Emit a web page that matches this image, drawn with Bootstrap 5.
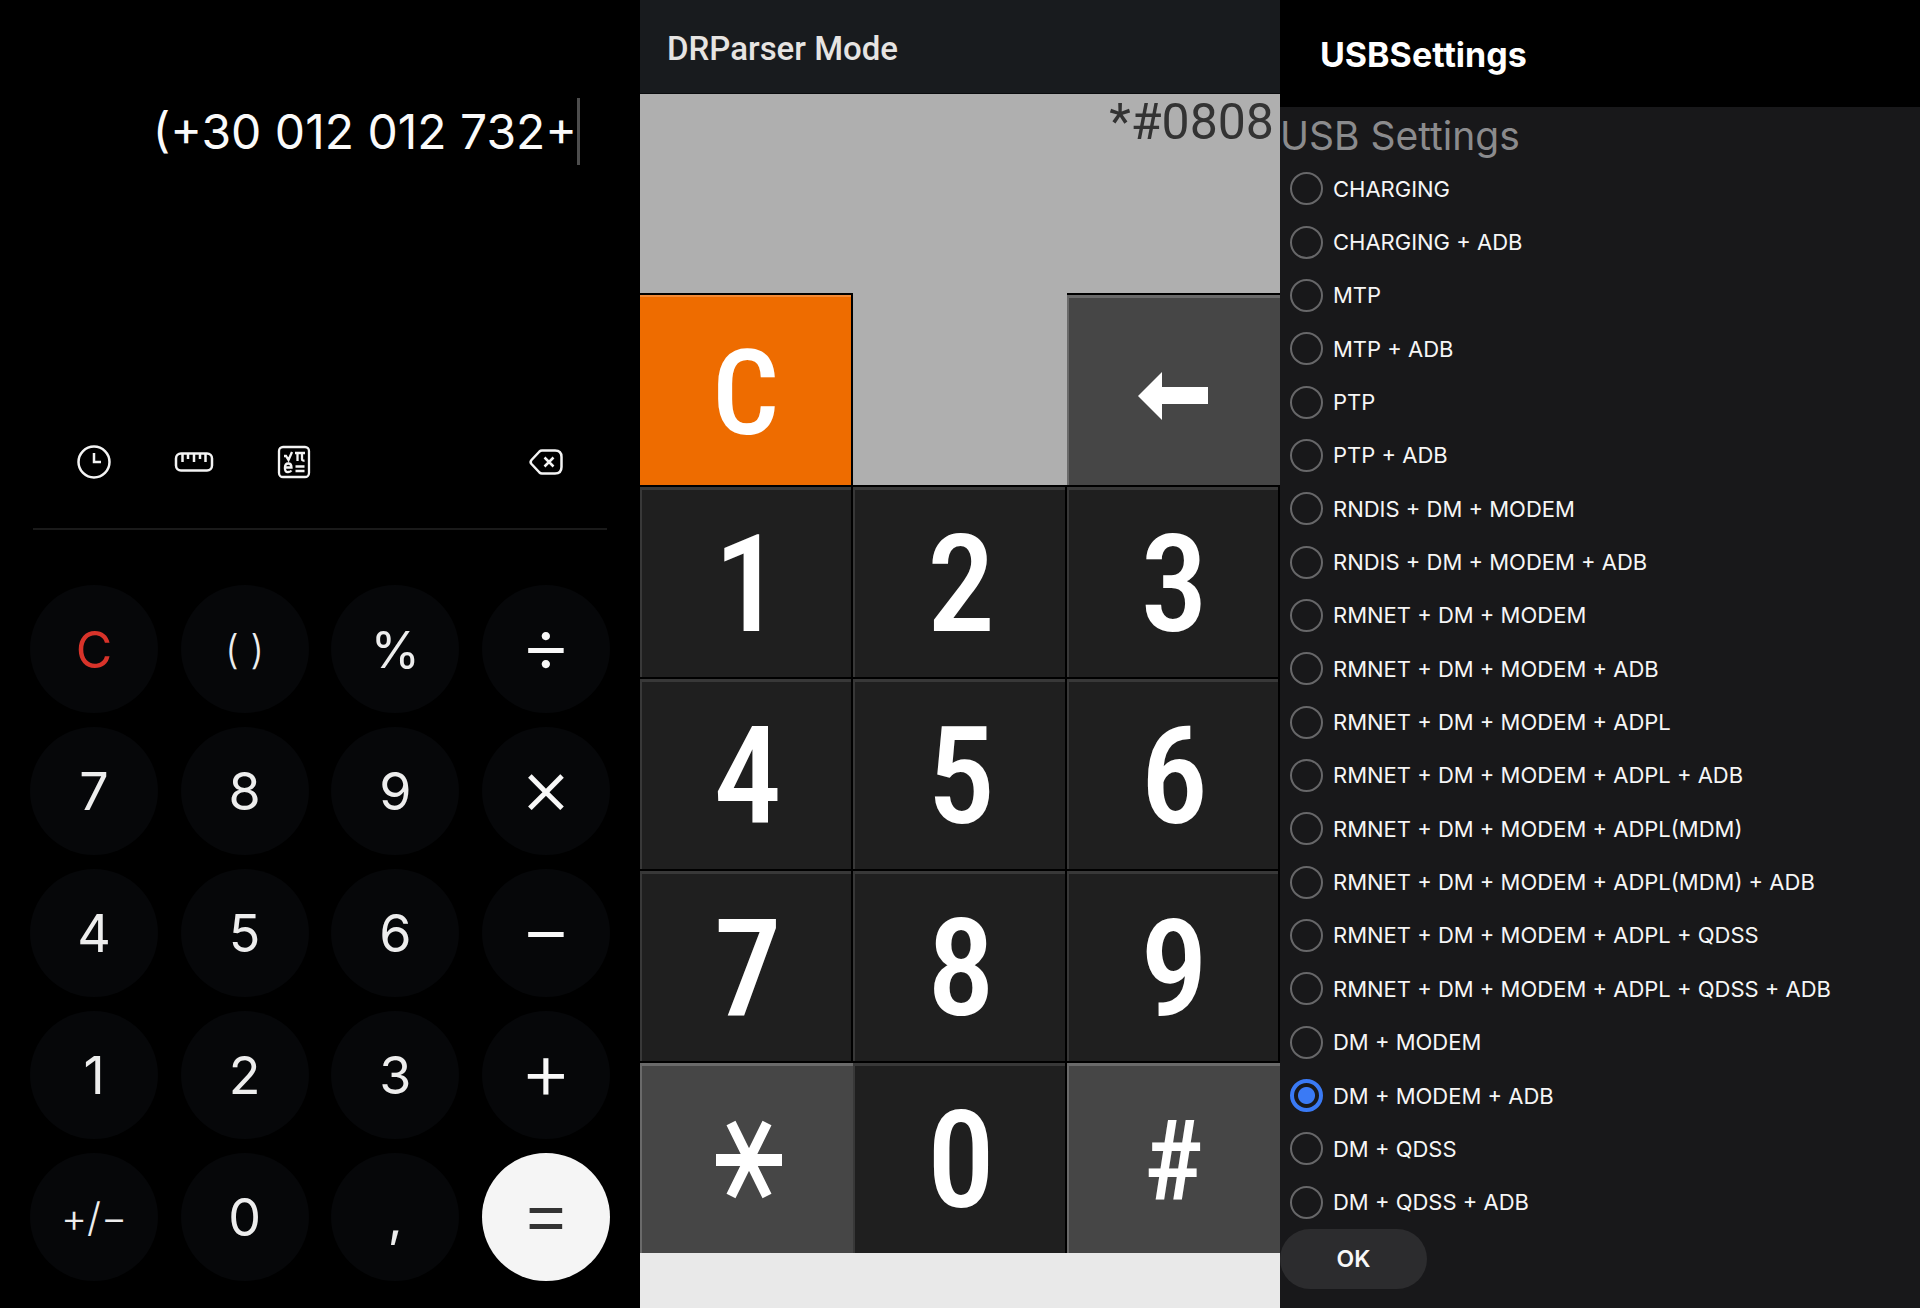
<!DOCTYPE html>
<html lang="en">
<head>
<meta charset="utf-8">
<meta name="viewport" content="width=device-width, initial-scale=1">
<title>Calculator, DRParser Mode, USBSettings</title>
<link href="https://cdn.jsdelivr.net/npm/bootstrap@5.3.0/dist/css/bootstrap.min.css" rel="stylesheet">
<style>
  body { background: #000; font-family: Inter, "Liberation Sans", sans-serif; }
  .screen { min-height: 100vh; }
  .plain-field { background: none; border: 0; outline: 0; padding: 0; min-width: 0; text-align: right; }
  button { border: 0; padding: 0; }

  /* Calculator */
  .calc-screen { background: #000; color: #fafafa; }
  .calc-display { height: 212px; padding: 98px 60px 0 30px; }
  .calc-display input { color: #fafafa; font-size: 48px; font-weight: 400; line-height: 67px; height: 67px; }
  .text-caret { width: 4px; height: 67px; background: #4d4d4d; }
  .calc-tools { margin-top: 212px; padding: 0 44px; height: 76px; }
  .calc-tools button { width: 100px; height: 76px; background: none; color: #f4f4f4; }
  .calc-tools svg { width: 40px; height: 40px; }
  .calc-rule { height: 2px; margin: 28px 33px 55px; background: #1a1a1a; }
  .calc-pad { display: grid; grid-template-columns: repeat(4, 128px); justify-content: space-between; row-gap: 14px; padding: 0 30px 26px; }
  .calc-pad button { height: 128px; padding-top: 2px; border-radius: 50%; background: #060709; color: #ededed; font-size: 52px; font-weight: 400; line-height: 60px; }
  .calc-pad .key-clear { color: #d8332a; font-size: 50px; }
  .calc-pad .key-mid { font-size: 50px; }
  .calc-pad .key-small { font-size: 40px; font-weight: 300; }
  .calc-pad .key-op { padding-bottom: 12px; color: #f8f8f8; font-size: 80px; font-weight: 300; }
  .calc-pad .key-equals { background: #f5f5f5; color: #333; }

  /* Parser keypad */
  .parser-screen { background: #e9e9e9; font-family: Roboto, "Liberation Sans", sans-serif; }
  .parser-bar { height: 94px; padding: 4px 27px 0; background: #181b1e; border-bottom: 1px solid #0a0c0e; color: #e6e4e2; }
  .parser-bar h1 { font-size: 33px; line-height: 40px; font-weight: 500; }
  .parser-readout { height: 199px; padding-right: 6px; background: #afafaf; }
  .parser-readout input { height: 56px; color: #333; font-size: 50px; line-height: 56px; }
  .parser-pad { display: grid; grid-template-columns: repeat(3, 1fr); background: #afafaf; }
  .parser-pad button { height: 192px; padding-top: 6px; padding-left: 4px; background: #1f1f1f; color: #fff; border-top: 2px solid #000; border-right: 2px solid #000; box-shadow: inset 2px 3px 0 #383838; font-family: "Roboto Condensed", "Liberation Sans Narrow", "Liberation Sans", sans-serif; font-size: 136px; font-weight: 500; line-height: 160px; }
  .parser-pad .pad-clear { padding-top: 8px; padding-left: 0; background: #ee6c00; box-shadow: inset 0 2px 0 #f38a35; font-size: 118px; }
  .parser-pad .pad-grey { padding-left: 0; background: #464646; border-right: 0; box-shadow: inset 2px 3px 0 #6a6a6a; font-size: 112px; }
  .parser-pad svg { display: block; width: 70px; height: 94px; margin: 0 auto; }

  /* USB settings */
  .usb-screen { background: #18181a; color: #f6f6f6; }
  .usb-bar { height: 107px; padding: 2px 40px 0; background: #000; }
  .usb-bar h1 { font-size: 34px; line-height: 40px; font-weight: 700; }
  .usb-heading { height: 55px; padding-top: 4px; color: #8b8b8d; font-size: 39px; line-height: 50px; font-weight: 400; }
  .usb-option { padding-left: 10px; gap: 10px; font-size: 22px; line-height: 30px; }
  .usb-option input { appearance: none; flex: none; width: 33px; height: 33px; margin: 0; border: 2px solid #676769; border-radius: 50%; }
  .usb-option input:checked { border: 4px solid #3a7af5; background: radial-gradient(circle, #3a7af5 8px, transparent 9px); }
  .usb-ok { width: 147px; height: 60px; margin-bottom: 19px; border-radius: 30px; background: #2c2c2e; color: #f8f8f8; font-size: 23px; font-weight: 600; line-height: 30px; }
</style>
<script src="https://cdn.jsdelivr.net/npm/bootstrap@5.3.0/dist/js/bootstrap.bundle.min.js"></script>
</head>
<body>
<main class="container-fluid p-0">
  <div class="row g-0">

    <section class="col-4 screen calc-screen d-flex flex-column" aria-label="Calculator">
      <div class="calc-display d-flex align-items-start">
        <input class="plain-field flex-grow-1" type="text" value="(+30 012 012 732+" aria-label="Expression">
        <span class="text-caret"></span>
      </div>
      <div class="calc-tools d-flex align-items-center">
        <button type="button" aria-label="History"><svg viewBox="0 0 40 40" fill="none" stroke="currentColor" stroke-width="2.500"><circle cx="20" cy="20" r="15.500"/><path d="M20 11v9h7"/></svg></button>
        <button type="button" aria-label="Unit converter"><svg viewBox="0 0 40 40" fill="none" stroke="currentColor" stroke-width="2.500"><rect x="2" y="11.500" width="36" height="17" rx="5"/><path d="M8.500 12v8M14 12v5M20 12v8M26 12v5M31.500 12v8"/></svg></button>
        <button type="button" aria-label="Scientific mode"><svg viewBox="0 0 40 40" fill="none" stroke="currentColor" stroke-width="2.300"><rect x="5" y="5" width="30" height="30" rx="4"/><path d="M10 14l2 0 2.500 4 3.500-8M21 11h10M23.500 11v8M28 11v6q0 2 2.500 1.500M11 25.500h6.500q0-4-3.300-4t-3.300 4.500 3.300 4q2.300 0 3.200-1.500M21.500 24.500h9M21.500 29h9"/></svg></button>
        <button class="ms-auto" type="button" aria-label="Backspace"><svg viewBox="0 0 40 40" fill="none" stroke="currentColor" stroke-width="2.500" stroke-linejoin="round"><path d="M16 8.500h13q6.500 0 6.500 6.500v10q0 6.500-6.500 6.500H16q-1.500 0-2.500-1L5.500 22q-1.800-2 0-4l8-8.500q1-1 2.500-1z"/><path d="M18.500 15.500l9 9M27.500 15.500l-9 9"/></svg></button>
      </div>
      <div class="calc-rule"></div>
      <div class="calc-pad">
        <button type="button" class="key-clear">C</button><button type="button" class="key-small">( )</button><button type="button" class="key-mid">%</button><button type="button" class="key-op">÷</button>
        <button type="button">7</button><button type="button">8</button><button type="button">9</button><button type="button" class="key-op">×</button>
        <button type="button">4</button><button type="button">5</button><button type="button">6</button><button type="button" class="key-op">−</button>
        <button type="button">1</button><button type="button">2</button><button type="button">3</button><button type="button" class="key-op">+</button>
        <button type="button" class="key-small">+/−</button><button type="button">0</button><button type="button">,</button><button type="button" class="key-op key-equals">=</button>
      </div>
    </section>

    <section class="col-4 screen parser-screen" aria-label="DRParser Mode">
      <header class="parser-bar d-flex align-items-center"><h1 class="m-0">DRParser Mode</h1></header>
      <div class="parser-readout"><input class="plain-field w-100" type="text" value="*#0808" aria-label="Code"></div>
      <div class="parser-pad">
        <button type="button" class="pad-clear">C</button><span></span><button type="button" class="pad-grey" aria-label="Delete"><svg viewBox="0 0 70 94"><path d="M0 50L24 26V41H70V58H24V74z" fill="#fff"/></svg></button>
        <button type="button">1</button><button type="button">2</button><button type="button">3</button>
        <button type="button">4</button><button type="button">5</button><button type="button">6</button>
        <button type="button">7</button><button type="button">8</button><button type="button">9</button>
        <button type="button" class="pad-grey" aria-label="*"><svg viewBox="0 0 70 94" fill="none" stroke="#fff"><path d="M4 46H70" stroke-width="12"/><path d="M19 9L55 82M55 9L19 82" stroke-width="10"/></svg></button><button type="button">0</button><button type="button" class="pad-grey">#</button>
      </div>
    </section>

    <section class="col-4 screen usb-screen d-flex flex-column" aria-label="USBSettings">
      <header class="usb-bar d-flex align-items-center"><h1 class="m-0 text-white">USBSettings</h1></header>
      <h2 class="usb-heading m-0">USB Settings</h2>
      <form class="d-flex flex-column flex-grow-1">
        <label class="usb-option d-flex align-items-center flex-fill"><input type="radio" name="usb">CHARGING</label>
        <label class="usb-option d-flex align-items-center flex-fill"><input type="radio" name="usb">CHARGING + ADB</label>
        <label class="usb-option d-flex align-items-center flex-fill"><input type="radio" name="usb">MTP</label>
        <label class="usb-option d-flex align-items-center flex-fill"><input type="radio" name="usb">MTP + ADB</label>
        <label class="usb-option d-flex align-items-center flex-fill"><input type="radio" name="usb">PTP</label>
        <label class="usb-option d-flex align-items-center flex-fill"><input type="radio" name="usb">PTP + ADB</label>
        <label class="usb-option d-flex align-items-center flex-fill"><input type="radio" name="usb">RNDIS + DM + MODEM</label>
        <label class="usb-option d-flex align-items-center flex-fill"><input type="radio" name="usb">RNDIS + DM + MODEM + ADB</label>
        <label class="usb-option d-flex align-items-center flex-fill"><input type="radio" name="usb">RMNET + DM + MODEM</label>
        <label class="usb-option d-flex align-items-center flex-fill"><input type="radio" name="usb">RMNET + DM + MODEM + ADB</label>
        <label class="usb-option d-flex align-items-center flex-fill"><input type="radio" name="usb">RMNET + DM + MODEM + ADPL</label>
        <label class="usb-option d-flex align-items-center flex-fill"><input type="radio" name="usb">RMNET + DM + MODEM + ADPL + ADB</label>
        <label class="usb-option d-flex align-items-center flex-fill"><input type="radio" name="usb">RMNET + DM + MODEM + ADPL(MDM)</label>
        <label class="usb-option d-flex align-items-center flex-fill"><input type="radio" name="usb">RMNET + DM + MODEM + ADPL(MDM) + ADB</label>
        <label class="usb-option d-flex align-items-center flex-fill"><input type="radio" name="usb">RMNET + DM + MODEM + ADPL + QDSS</label>
        <label class="usb-option d-flex align-items-center flex-fill"><input type="radio" name="usb">RMNET + DM + MODEM + ADPL + QDSS + ADB</label>
        <label class="usb-option d-flex align-items-center flex-fill"><input type="radio" name="usb">DM + MODEM</label>
        <label class="usb-option d-flex align-items-center flex-fill"><input type="radio" name="usb" checked>DM + MODEM + ADB</label>
        <label class="usb-option d-flex align-items-center flex-fill"><input type="radio" name="usb">DM + QDSS</label>
        <label class="usb-option d-flex align-items-center flex-fill"><input type="radio" name="usb">DM + QDSS + ADB</label>
        <button type="submit" class="usb-ok">OK</button>
      </form>
    </section>

  </div>
</main>
</body>
</html>
